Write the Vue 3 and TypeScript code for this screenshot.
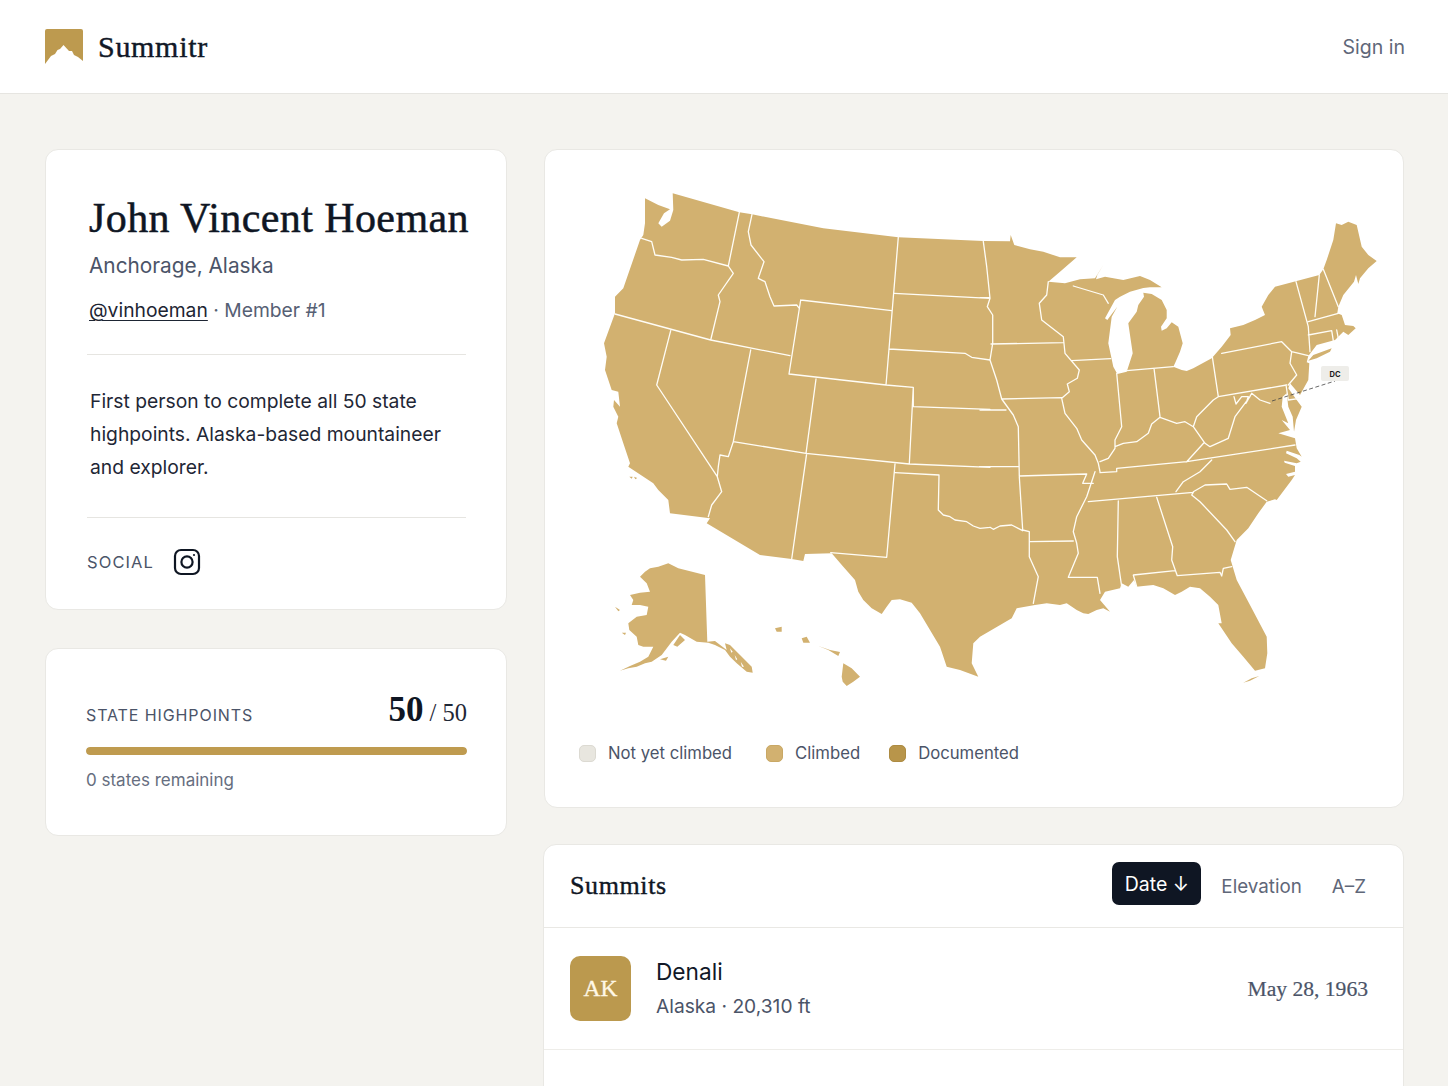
<template>
  <div class="app">
    <header class="topbar">
      <div class="brand">
        <svg class="logo" width="38" height="35" viewBox="0 0 38 35">
          <path d="M2 0H36a2 2 0 0 1 2 2V32L33 28 29 26 27 22 24 22 18.5 16 15 20 12.5 21 10 25 6 27 0 35V2a2 2 0 0 1 2-2Z" fill="#bd9a4f" />
        </svg>
        <span class="brand-name">Summitr</span>
      </div>
      <a class="signin">Sign in</a>
    </header>

    <main class="page">
      <aside class="side">
        <section class="card profile">
          <h1>John Vincent Hoeman</h1>
          <p class="location">Anchorage, Alaska</p>
          <p class="handle"><span class="link">@vinhoeman</span> · Member #1</p>
          <hr />
          <p class="bio">First person to complete all 50 state highpoints. Alaska-based mountaineer and explorer.</p>
          <hr />
          <div class="social">
            <span>SOCIAL</span>
            <svg width="28" height="28" viewBox="0 0 28 28" fill="none" stroke="#0f1623" stroke-width="2.2">
              <rect x="2" y="2" width="24" height="24" rx="6" />
              <circle cx="14" cy="14" r="5.6" />
              <circle cx="21" cy="7" r="1.1" fill="#0f1623" stroke="none" />
            </svg>
          </div>
        </section>

        <section class="card progress">
          <div class="progress-head">
            <span class="label">STATE HIGHPOINTS</span>
            <span class="count"><b>50</b> / 50</span>
          </div>
          <div class="track"><div class="fill" :style="{ width: pct + '%' }"></div></div>
          <p class="remaining">0 states remaining</p>
        </section>
      </aside>

      <div class="content">
        <section class="card map-card">
          <svg class="map" width="800" height="520" viewBox="590 180 800 520">
            <path :d="landPath" fill="#d2b170" />
            <path :d="borderPath" fill="none" stroke="#fffdf6" stroke-width="1.3" stroke-linejoin="round" stroke-linecap="round" />
            <path :d="specks" fill="#fff" />
            <path d="M1272 401 1335 381" fill="none" stroke="#444" stroke-width="0.8" stroke-dasharray="4 2.5" />
            <rect x="1321" y="366" width="28" height="15" rx="2" fill="#eeede9" />
            <text x="1335" y="376.5" text-anchor="middle" class="dc">DC</text>
          </svg>
          <div class="legend">
            <div v-for="l in legend" :key="l.name" class="legend-item">
              <i :style="{ background: l.color, borderColor: l.edge }"></i>
              <span>{{ l.name }}</span>
            </div>
          </div>
        </section>

        <section class="card summits">
          <div class="summits-head">
            <h2>Summits</h2>
            <div class="sorts">
              <button class="active">Date ↓</button>
              <button>Elevation</button>
              <button>A–Z</button>
            </div>
          </div>
          <div v-for="s in summits" :key="s.code" class="row">
            <div class="badge">{{ s.code }}</div>
            <div class="info">
              <div class="peak">{{ s.peak }}</div>
              <div class="meta">{{ s.state }} · {{ s.height }}</div>
            </div>
            <div class="date">{{ s.date }}</div>
          </div>
        </section>
      </div>
    </main>
  </div>
</template>

<script setup lang="ts">
const pct = 100

const legend = [
  { name: 'Not yet climbed', color: '#e8e6df', edge: '#dcdad2' },
  { name: 'Climbed', color: '#d2b170', edge: '#c9a865' },
  { name: 'Documented', color: '#b8954a', edge: '#ad8b42' },
]

const summits = [
  { code: 'AK', peak: 'Denali', state: 'Alaska', height: '20,310 ft', date: 'May 28, 1963' },
]

// map traced from crops at 3x, each frame has its own origin
type Frame = [number, number]
const A: Frame = [590, 180]
const B: Frame = [980, 200]
const C: Frame = [590, 450]
const D: Frame = [980, 440]

function pts(f: Frame, s: string): string[] {
  const n = s.trim().split(/\s+/).map(Number)
  const out: string[] = []
  for (let i = 0; i < n.length; i += 2) {
    out.push(`${(f[0] + n[i] / 3).toFixed(1)} ${(f[1] + n[i + 1] / 3).toFixed(1)}`)
  }
  return out
}
const line = (f: Frame, s: string) => 'M' + pts(f, s).join('L')
const shape = (...parts: [Frame, string][]) => 'M' + parts.flatMap(([f, s]) => pts(f, s)).join('L') + 'Z'

const landPath = [
  shape(
    [A, '165 55 205 75 240 88 222 100 205 130 215 140 240 122 250 90 248 40 448 97 486 103 700 145 925 172 1180 183'],
    [B, '90 124 92 105 103 135 150 148 190 155 240 172 290 172 240 215 205 245 255 250 300 238 345 235 370 195 352 225 348 238 375 230 430 240 480 228 510 240 545 262 510 262 490 264 450 275 420 290 405 300 375 355 382 360 412 320 395 350 385 430 400 500 412 522 440 515 458 460 445 370 470 335 475 315 492 290 490 278 515 282 545 300 560 330 560 355 543 380 545 392 560 385 575 367 595 380 608 430 600 455 585 490 580 500 605 510 620 513 640 505 695 475 725 440 752 405 750 385 790 375 825 360 855 345 845 320 865 285 885 260 950 243 1018 225 1030 208 1040 180 1060 120 1068 70 1085 75 1105 65 1130 75 1145 140 1165 165 1190 183 1165 205 1140 235 1135 252 1128 225 1122 245 1090 285 1075 320 1072 340 1085 345 1095 375 1120 378 1127 385 1105 405 1090 395 1065 420 1010 435 985 468 980 487 988 490 985 540 960 585 930 550 925 565 950 600 965 620 948 660 942 695 938 650 925 620 920 580 908 590 905 620 925 670 905 660 930 690 895 700 945 715 950 745 965 770 958 765 920 752 918 760 950 775 962 785 950 790 912 782 914 788 945 798 945 815 918 822 925 830 945 825 935 840 890 900'],
    [D, '885 178 860 185 835 220 805 265 770 300 752 360 770 420 815 505 860 590 862 640 855 685 825 692 790 650 755 610 715 550 725 550 715 495 690 470 660 445 630 440 605 455 585 465 550 445 520 435 490 438 470 440 462 420 445 440 425 430 420 445 375 455 360 480 390 515 370 505 350 510 325 522 310 520 290 510 260 490 240 495 200 490 165 495 110 505 95 535 0 590'],
    [C, '1150 580 1145 640 1165 680 1110 660 1070 650 1055 605 1050 590 1020 540 990 490 965 458 930 448 905 450 890 470 875 492 845 475 820 450 805 425 795 390 760 350 725 310 645 312 640 333 605 327 510 315 350 220 360 205 240 190 235 150 205 120 190 100 115 50'],
    [A, '120 850 100 790 80 730 85 710 70 680 72 660 90 680 85 635 65 630 45 570 50 530 42 490 75 400 75 350 100 325 150 180 160 165 165 130'],
  ),
  // Long Island, Keys
  shape([B, '985 482 1000 465 1055 445 1050 455 1010 475']),
  shape([D, '790 728 815 715 838 708 810 722']),
  // Alaska
  shape([C, '150 380 165 365 180 355 205 350 235 340 265 355 345 375 352 575 375 573 410 600 405 580 420 585 450 615 485 650 488 668 470 665 440 640 420 620 405 600 375 585 355 578 320 575 285 555 270 548 245 575 215 615 185 635 165 640 140 650 115 655 90 662 120 648 150 635 175 620 190 590 160 590 145 585 140 560 118 540 115 520 140 500 170 495 175 470 150 465 125 465 130 450 120 435 150 428 180 425 170 400']),
  shape([C, '210 628 235 620 228 632']),
  shape([C, '250 585 270 555 285 570 262 590']),
  // Hawaii
  shape([C, '760 640 785 655 810 680 790 695 770 708 758 695 755 680']),
  shape([C, '685 588 720 600 750 606 745 618 715 600']),
  shape([C, '635 565 650 560 660 578 640 578']),
  shape([C, '555 535 575 530 575 545 560 545']),
  // small islands
  shape([C, '118 80 128 80 125 86']),
  shape([C, '132 80 142 84 136 88']),
  shape([C, '75 470 90 480 85 484']),
  shape([C, '95 548 108 548 105 555']),
].join('')

const specks = [
  shape([C, '420 595 428 605 424 608']),
  shape([C, '434 615 442 628 438 630']),
  shape([C, '452 635 462 650 456 650']),
].join('')

const borderPath = [
  // northwest
  line(A, '155 175 185 185 195 225 245 232 275 240 340 238 415 258'),
  line(A, '448 97 415 258 430 280 385 345 390 365 362 480'),
  line(A, '486 103 475 155 483 195 522 245 505 295 525 305 540 350 552 378 620 375 628 385'),
  line(A, '75 402 362 480 600 527'),
  line(A, '242 452 200 615 382 890'),
  line(A, '482 510 430 785 415 830 390 825 385 860 382 890'),
  line(C, '382 80 395 125 365 165 355 200'),
  // rockies and plains
  line(A, '632 360 905 392'),
  line(A, '632 360 597 582 888 615 970 622 970 680 1200 688'),
  line(A, '925 172 888 615'),
  line(A, '913 340 1200 355'),
  line(A, '897 507 1125 520 1145 532 1200 540'),
  line(A, '678 597 648 820'),
  line(A, '430 785 648 820 958 852 1200 862'),
  line(A, '970 622 958 852'),
  line(C, '650 10 605 327'),
  line(C, '915 42 890 322 722 308'),
  line(C, '915 68 1047 75 1045 180 1060 195 1080 200 1095 210 1130 215 1150 228 1170 235 1200 232'),
  line(D, '30 262 40 268 60 258 95 255 128 272'),
  // midwest
  line(B, '10 124 20 200 30 295 22 320 38 345 38 430 30 480 50 540 65 597 100 645 115 680 118 828 320 822 308 850 340 850'),
  line(B, '0 293 30 293'),
  line(B, '0 630 78 630'),
  line(B, '0 800 115 800'),
  line(B, '33 432 250 428'),
  line(B, '205 245 200 285 178 310 185 360 250 410 255 460 298 510 292 535 262 552 268 575 245 595 255 640 290 685 305 720 345 765 355 790 360 815'),
  line(B, '65 597 245 593'),
  line(B, '275 482 392 476'),
  line(B, '280 258 370 285 385 310'),
  line(B, '410 520 425 680 405 720 405 745 385 775 360 785'),
  line(B, '440 512 580 500'),
  line(B, '522 505 540 650'),
  line(B, '697 470 715 590'),
  // ohio valley
  line(B, '405 740 430 730 470 725 505 700 515 672 540 652 590 670 615 665 640 680 650 650 700 600 715 590'),
  line(B, '715 590 920 555'),
  line(B, '762 590 768 612 785 590 805 590 798 610 815 580 840 600 870 610'),
  line(B, '640 680 675 730 690 740 745 715 765 650 810 590'),
  line(B, '620 785 672 728'),
  line(B, '360 818 410 815 410 805 620 785 945 735'),
  // northeast
  line(B, '725 460 905 425 935 455 985 467'),
  line(B, '935 455 930 490 950 525 925 555'),
  line(B, '918 555 925 600 960 595'),
  line(B, '948 245 985 380 990 455'),
  line(B, '1018 225 1005 350'),
  line(B, '1030 208 1075 320'),
  line(B, '985 365 1075 340'),
  line(B, '985 405 1055 392 1060 422'),
  line(B, '1070 390 1075 415'),
  // south
  line(D, '695 60 660 95 610 125 588 155'),
  line(D, '325 185 640 157'),
  line(D, '345 95 320 170 290 230 280 275 290 310 295 340 265 412 352 412 360 460'),
  line(D, '150 305 280 303'),
  line(D, '118 110 128 270 148 275 148 350 175 410 160 490'),
  line(D, '415 183 412 350 425 440'),
  line(D, '530 172 578 320 575 360 592 407 720 397 725 408 730 385 755 380'),
  line(D, '470 440 460 405 585 392'),
  line(D, '640 157 635 165 660 185 740 270 765 305'),
  line(D, '640 155 675 135 740 132 750 148 800 142 860 182'),
].join('')
</script>

<style>
html, body {
  overflow: hidden;
  background: #f4f3ef;
}
</style>

<style scoped>
.app {
  min-height: 1086px;
  background: #f4f3ef;
  font-family: Inter, "Liberation Sans", sans-serif;
  color: #0f1623;
}

.topbar {
  height: 93px;
  background: #fff;
  border-bottom: 1px solid #e6e5e1;
  display: flex;
  align-items: center;
  justify-content: space-between;
  padding: 0 43px 0 45px;
}

.brand {
  display: flex;
  align-items: center;
  gap: 15px;
}

.logo {
  margin-top: -1px;
}

.brand-name {
  font-family: "Liberation Serif", serif;
  font-size: 30px;
  letter-spacing: 0.7px;
  color: #111827;
  -webkit-text-stroke: 0.4px #111827;
}

.signin {
  font-size: 19.5px;
  color: #5f6779;
}

.page {
  display: grid;
  grid-template-columns: 462px 860px;
  gap: 37px;
  padding: 55px 0 0 45px;
  align-items: start;
}

.side,
.content {
  display: flex;
  flex-direction: column;
}

.side {
  gap: 38px;
}

.content {
  gap: 36px;
}

.card {
  background: #fff;
  border: 1px solid #e9e8e4;
  border-radius: 13px;
}

.profile {
  padding: 43px 40px 33px 41px;
}

.profile h1 {
  margin: 0 0 0 2px;
  font-family: "Liberation Serif", serif;
  font-size: 42px;
  line-height: 50px;
  font-weight: 400;
  letter-spacing: 0.4px;
  white-space: nowrap;
  -webkit-text-stroke: 0.5px #0f1623;
}

.location {
  margin: 8px 0 0 2px;
  font-size: 20.8px;
  line-height: 30px;
  color: #4b5468;
}

.handle {
  margin: 14px 0 0 2px;
  font-size: 19.3px;
  line-height: 30px;
  color: #566074;
}

.link {
  color: #1d2533;
  text-decoration: underline;
  text-decoration-thickness: 1px;
  text-underline-offset: 3px;
}

.profile hr {
  border: 0;
  border-top: 1px solid #e6e5e1;
  margin: 0;
}

.handle + hr {
  margin-top: 29px;
}

.bio {
  margin: 30px 0 33px 3px;
  font-size: 19.3px;
  line-height: 33px;
  color: #1f2736;
}

.social {
  display: flex;
  align-items: center;
  gap: 19px;
  margin-top: 30px;
  font-size: 16.5px;
  letter-spacing: 1.1px;
  color: #4b5468;
}

.progress {
  padding: 41px 39px 43px 40px;
}

.progress-head {
  display: flex;
  justify-content: space-between;
  align-items: baseline;
}

.label {
  font-size: 16px;
  letter-spacing: 0.9px;
  color: #4b5468;
}

.count {
  font-family: "Liberation Serif", serif;
  font-size: 24.5px;
  color: #1f2736;
}

.count b {
  font-size: 35px;
  color: #0f1623;
}

.track {
  height: 8px;
  margin-top: 17px;
  background: #e8e6df;
  border-radius: 4px;
  overflow: hidden;
}

.fill {
  height: 100%;
  background: #bf9b4f;
  border-radius: 4px;
}

.remaining {
  margin: 13px 0 0;
  font-size: 17px;
  line-height: 24px;
  color: #666e80;
}

.map-card {
  padding: 30px 0 43px 45px;
  display: flex;
  flex-direction: column;
}

.map {
  display: block;
}

.dc {
  font-family: Inter, "Liberation Sans", sans-serif;
  font-size: 7.5px;
  font-weight: 700;
  fill: #1a1a1a;
}

.legend {
  display: flex;
  gap: 29px;
  margin-top: 42px;
  margin-left: -11px;
}

.legend-item {
  display: flex;
  align-items: center;
  gap: 12px;
  font-size: 16.7px;
  line-height: 22px;
  color: #4b5468;
}

.legend-item:first-child {
  margin-right: 5px;
}

.legend-item i {
  display: block;
  width: 17px;
  height: 17px;
  box-sizing: border-box;
  border: 1px solid;
  border-radius: 5px;
}

.summits {
  padding-bottom: 80px;
  margin-left: -1px;
}

.summits-head {
  height: 82px;
  display: flex;
  align-items: center;
  justify-content: space-between;
  padding: 0 37px 0 26px;
  border-bottom: 1px solid #e9e8e4;
}

.summits-head h2 {
  margin: 0;
  font-family: "Liberation Serif", serif;
  font-size: 26px;
  font-weight: 400;
  letter-spacing: 0.6px;
  -webkit-text-stroke: 0.4px #0f1623;
}

.sorts {
  display: flex;
  align-items: center;
  gap: 20px;
}

.sorts button {
  border: 0;
  background: none;
  padding: 0;
  font: inherit;
  font-size: 18.8px;
  color: #5f6779;
}

.sorts button + button + button {
  margin-left: 10px;
}

.sorts .active {
  width: 89px;
  height: 43px;
  margin-top: -5px;
  border-radius: 7px;
  background: #0f1623;
  color: #fff;
  font-size: 19.5px;
}

.row {
  display: flex;
  align-items: center;
  height: 121px;
  padding: 0 35px 0 26px;
  border-bottom: 1px solid #eeede9;
}

.badge {
  width: 61px;
  height: 65px;
  flex: none;
  border-radius: 10px;
  background: #bb994e;
  color: #fff8e6;
  font-family: "Liberation Serif", serif;
  font-size: 23.5px;
  -webkit-text-stroke: 0.3px #fff8e6;
  display: flex;
  align-items: center;
  justify-content: center;
}

.info {
  flex: 1;
  margin-left: 25px;
}

.peak {
  font-size: 22.7px;
  line-height: 32px;
  color: #111827;
}

.meta {
  margin-top: 3px;
  font-size: 19.2px;
  line-height: 30px;
  color: #4b5468;
}

.date {
  margin-top: 1px;
  font-family: "Liberation Serif", serif;
  font-size: 21.6px;
  color: #4b5468;
  -webkit-text-stroke: 0.2px #4b5468;
}
</style>
